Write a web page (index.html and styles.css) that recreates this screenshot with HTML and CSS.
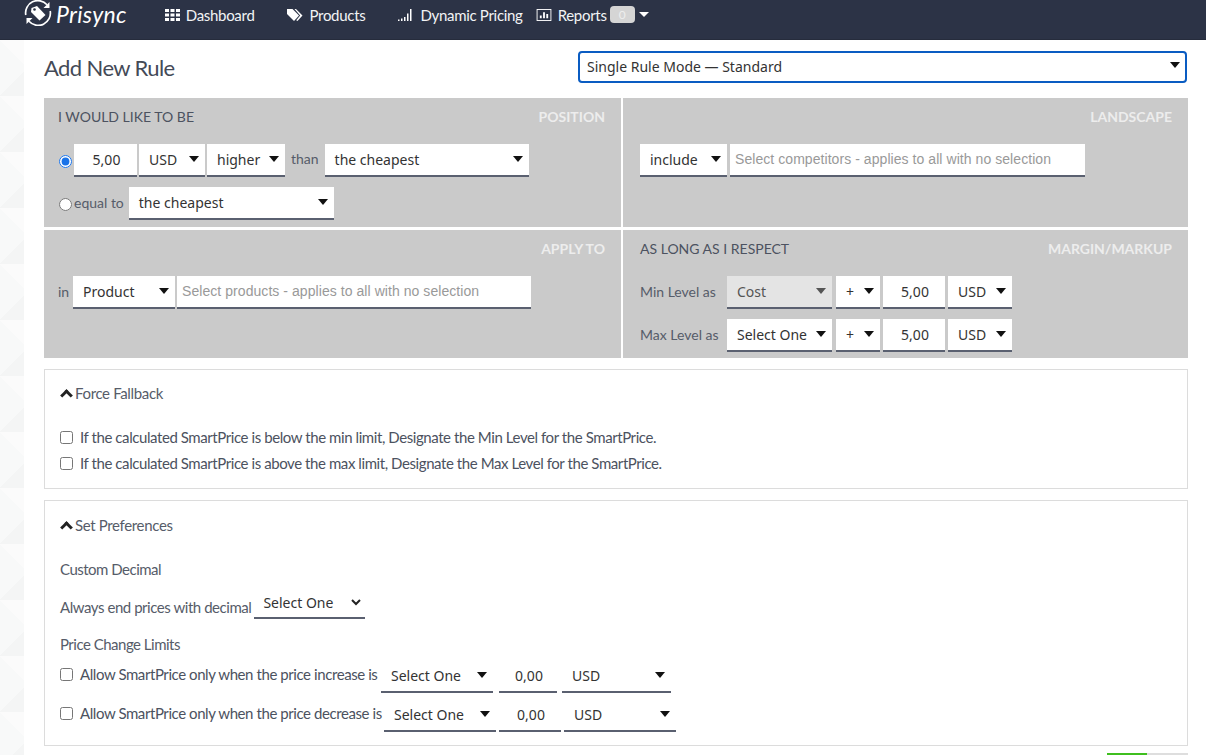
FILE: index.html
```html
<!DOCTYPE html>
<html lang="en">
<head>
<meta charset="utf-8">
<title>Add New Rule</title>
<link rel="stylesheet" href="styles.css">
</head>
<body>
<nav class="nav">
  <a class="brand">
    <svg class="brand-icon" viewBox="0 0 28 26" fill="none" stroke="#fff" stroke-width="1.700">
      <path d="M1.800 15A12.200 12.200 0 0 1 23 4.800"/>
      <path d="M26.200 11A12.200 12.200 0 0 1 5 21.200"/>
      <path d="M25.500 2v6h-6z" fill="#fff" stroke="none"/>
      <path d="M2.500 24v-6h6z" fill="#fff" stroke="none"/>
      <path d="M7.500 8l5.500-2 8.500 9-6 5.500-8.500-8.500z" fill="#fff" stroke="none"/>
      <circle cx="10.500" cy="9.500" r="1.300" fill="#2c3346" stroke="none"/>
    </svg>
    <span class="brand-name">Prisync</span>
  </a>
  <a class="nav-item nav-item-first">
    <svg class="nav-icon" viewBox="0 0 15 12" fill="#fff"><path d="M0 0h4v3H0zM5.500 0h4v3h-4zM11 0h4v3h-4zM0 4.500h4v3H0zM5.500 4.500h4v3h-4zM11 4.500h4v3h-4zM0 9h4v3H0zM5.500 9h4v3h-4zM11 9h4v3h-4z"/></svg>
    Dashboard
  </a>
  <a class="nav-item">
    <svg class="nav-icon" viewBox="0 0 16 12" fill="#fff"><path d="M0 0h5.500L12 6.500 7 12 0 5z"/><path d="M7.500 0h1.500L15.500 6.500 10.500 12l-1.300-.800 4-4.700z"/></svg>
    Products
  </a>
  <a class="nav-item">
    <svg class="nav-icon" viewBox="0 0 16 12" fill="#fff"><path d="M0 10.500h1.500V12H0zM3 9.500h1.500V12H3zM6 8h1.500v4H6zM9 4.500h1.500V12H9zM12 0h1.500v12H12z"/></svg>
    Dynamic Pricing
  </a>
  <a class="nav-item nav-item-tight">
    <svg class="nav-icon" viewBox="0 0 16 13" fill="none" stroke="#fff"><rect x=".5" y=".5" width="15" height="12"/><path d="M4.500 10V7M8 10V3.500M11.500 10V5.500" stroke-width="2"/></svg>
    Reports
    <span class="badge">0</span>
    <span class="nav-caret"></span>
  </a>
</nav>

<div class="page">
  <div class="strip"></div>
  <main class="main">
    <header class="head">
      <h1 class="title">Add New Rule</h1>
      <div class="mode">Single Rule Mode — Standard<span class="caret"></span></div>
    </header>

    <section class="rules">
      <div class="cell">
        <div class="cell-head"><span>I WOULD LIKE TO BE</span><span class="tag">POSITION</span></div>
        <div class="row">
          <input class="radio" type="radio" name="pos" checked>
          <input class="field w63" value="5,00">
          <div class="sel w66">USD<span class="caret"></span></div>
          <div class="sel w78">higher<span class="caret"></span></div>
          <span class="lbl than">than</span>
          <div class="sel w204">the cheapest<span class="caret"></span></div>
        </div>
        <div class="row">
          <input class="radio" type="radio" name="pos">
          <span class="lbl equal">equal to</span>
          <div class="sel w205">the cheapest<span class="caret"></span></div>
        </div>
      </div>

      <div class="cell cell-right">
        <div class="cell-head"><span></span><span class="tag">LANDSCAPE</span></div>
        <div class="row row-loose">
          <div class="sel w87">include<span class="caret"></span></div>
          <input class="field field-search w355" placeholder="Select competitors - applies to all with no selection">
        </div>
      </div>

      <div class="cell">
        <div class="cell-head"><span></span><span class="tag">APPLY TO</span></div>
        <div class="row">
          <span class="lbl in">in</span>
          <div class="sel w102">Product<span class="caret"></span></div>
          <input class="field field-search w354" placeholder="Select products - applies to all with no selection">
        </div>
      </div>

      <div class="cell cell-right">
        <div class="cell-head"><span>AS LONG AS I RESPECT</span><span class="tag">MARGIN/MARKUP</span></div>
        <div class="row row-wide">
          <span class="lbl level">Min Level as</span>
          <div class="sel sel-off w105">Cost<span class="caret"></span></div>
          <div class="sel w44">+<span class="caret"></span></div>
          <input class="field w62" value="5,00">
          <div class="sel w64">USD<span class="caret"></span></div>
        </div>
        <div class="row row-wide">
          <span class="lbl level">Max Level as</span>
          <div class="sel w105">Select One<span class="caret"></span></div>
          <div class="sel w44">+<span class="caret"></span></div>
          <input class="field w62" value="5,00">
          <div class="sel w64">USD<span class="caret"></span></div>
        </div>
      </div>
    </section>

    <section class="panel panel-fallback">
      <h2 class="panel-title"><span class="chev"></span>Force Fallback</h2>
      <label class="check check-a"><input type="checkbox">If the calculated SmartPrice is below the min limit, Designate the Min Level for the SmartPrice.</label>
      <label class="check check-b"><input type="checkbox">If the calculated SmartPrice is above the max limit, Designate the Max Level for the SmartPrice.</label>
    </section>

    <section class="panel panel-prefs">
      <h2 class="panel-title"><span class="chev"></span>Set Preferences</h2>
      <div class="sub sub-decimal">Custom Decimal</div>
      <div class="decimal">
        <span>Always end prices with decimal</span>
        <div class="plain-sel">Select One
          <svg class="chevron" viewBox="0 0 10 7" fill="none" stroke="#222" stroke-width="2"><path d="M1 1l4 4 4-4"/></svg>
        </div>
      </div>
      <div class="sub sub-limits">Price Change Limits</div>
      <div class="limit limit-a">
        <label class="check"><input type="checkbox">Allow SmartPrice only when the price increase is</label>
        <div class="sel sel-line w112">Select One<span class="caret"></span></div>
        <input class="field field-line w58" value="0,00">
        <div class="sel sel-line w109">USD<span class="caret"></span></div>
      </div>
      <div class="limit limit-b">
        <label class="check"><input type="checkbox">Allow SmartPrice only when the price decrease is</label>
        <div class="sel sel-line w112">Select One<span class="caret"></span></div>
        <input class="field field-line w62" value="0,00">
        <div class="sel sel-line w112">USD<span class="caret"></span></div>
      </div>
    </section>

    <div class="progress"><span class="progress-fill"></span></div>
  </main>
</div>
</body>
</html>
```

FILE: styles.css
```css
* { box-sizing: border-box; }

html, body {
  margin: 0;
  height: 755px;
  overflow: hidden;
  background: #fff;
  font-family: "Lato", "Liberation Sans", sans-serif;
  font-size: 14px;
  color: #565c69;
}

/* navigation */
.nav {
  display: flex;
  align-items: center;
  height: 40px;
  padding: 0 0 10px 24px;
  background: #2c3346;
  border-bottom: 1px solid #262c3c;
  color: #fff;
}
.brand { display: flex; align-items: center; }
.brand-icon { width: 28px; height: 26px; margin-top: -4px; }
.brand-name {
  margin: -2px 0 0 4px;
  font-size: 23px;
  font-style: italic;
  line-height: 28px;
  color: #fff;
  letter-spacing: .3px;
}
.nav-item {
  display: flex;
  align-items: center;
  margin-left: 33px;
  font-size: 15px;
  letter-spacing: -.3px;
  color: #f2f3f5;
  white-space: nowrap;
}
.nav-item-first { margin-left: 38px; }
.nav-item-tight { margin-left: 13px; }
.nav-icon { flex: none; width: 16px; height: 12px; margin-right: 6px; }
.nav-item-first .nav-icon { width: 15px; }
.badge {
  width: 25px;
  height: 17px;
  margin-left: 3px;
  border-radius: 4px;
  background: #d5d5d5;
  color: #eee;
  font-size: 12px;
  letter-spacing: 0;
  line-height: 17px;
  text-align: center;
}
.nav-caret {
  margin-left: 4px;
  border-top: 5px solid #fff;
  border-left: 5px solid transparent;
  border-right: 5px solid transparent;
}

/* page */
.page { display: flex; height: 715px; }
.strip {
  flex: 0 0 24px;
  background-color: #f8f9f9;
  background-image:
    linear-gradient(135deg, transparent 70%, #f4f5f5 70%),
    linear-gradient(45deg, transparent 70%, #fbfbfb 70%);
  background-size: 24px 56px;
}
.main { width: 1164px; padding-left: 20px; }

.head {
  display: flex;
  justify-content: space-between;
  align-items: center;
  height: 58px;
  padding: 11px 1px 15px 0;
}
.title {
  margin: 2px 0 0;
  font-size: 22px;
  font-weight: 400;
  color: #444a57;
  letter-spacing: -.6px;
  line-height: 32px;
}
.mode {
  display: flex;
  align-items: center;
  justify-content: space-between;
  width: 609px;
  height: 32px;
  padding: 0 5px 2px 7px;
  border: 2px solid #0a5cc2;
  border-radius: 4px;
  background: #fff;
  font-family: "Noto Sans", "Open Sans", sans-serif;
  font-size: 14px;
  color: #333;
}

/* rule grid */
.rules {
  display: grid;
  grid-template-columns: 577px 565px;
  grid-template-rows: 129px 128px;
  column-gap: 2px;
  row-gap: 3px;
}
.cell {
  padding: 0 16px 0 14px;
  background: #cacaca;
}
.cell-right { padding-left: 17px; }
.cell-head {
  display: flex;
  justify-content: space-between;
  height: 46px;
  padding-top: 10px;
  line-height: 18px;
  font-size: 14px;
  color: #4c5260;
}
.tag { color: #ededed; font-weight: 700; }

.row {
  display: flex;
  align-items: center;
  gap: 2px;
  height: 33px;
  margin-bottom: 10px;
}
.row-loose { gap: 3px; }
.row-wide { gap: 3px; }

.radio { width: 13px; height: 13px; margin: 2px 0 0 1px; accent-color: #1a73e8; }

.lbl { white-space: nowrap; }
.than { margin: -4px 4px 0 4px; }
.equal { margin: -2px 3px 0 0; }
.in { width: 13px; margin-top: -2px; }
.level { width: 87px; margin-top: -3px; }
.level + .sel { margin: 0 1px 0 -3px; }

.sel, .field {
  height: 33px;
  border: 0;
  border-bottom: 2px solid #5a6070;
  border-radius: 0;
  background: #fff;
  font-family: "Noto Sans", "Open Sans", sans-serif;
  font-size: 14px;
  color: #333;
  outline: 0;
}
.sel {
  display: flex;
  align-items: center;
  justify-content: space-between;
  padding: 0 6px 0 10px;
  white-space: nowrap;
}
.sel-off { background: #e4e4e4; color: #555; }
.sel-off .caret { border-top-color: #555; }
.field { padding: 0 8px 0 10px; text-align: center; }
.field-search {
  padding: 0 5px 2px;
  text-align: left;
  font-family: "Liberation Sans", sans-serif;
  font-size: 14px;
  letter-spacing: .06px;
}
.field-search::placeholder { color: #999; opacity: 1; }

.caret {
  flex: none;
  margin: -2px 0 0 0;
  border-top: 6px solid #111;
  border-left: 5px solid transparent;
  border-right: 5px solid transparent;
}

.w44 { width: 44px; }
.w58 { width: 58px; }
.w62 { width: 62px; }
.w63 { width: 63px; }
.w64 { width: 64px; }
.w66 { width: 66px; }
.w78 { width: 78px; }
.w87 { width: 87px; }
.w102 { width: 102px; }
.w105 { width: 105px; }
.w109 { width: 109px; }
.w112 { width: 112px; }
.w204 { width: 204px; }
.w205 { width: 205px; }
.w354 { width: 354px; }
.w355 { width: 355px; }

/* panels */
.panel {
  position: relative;
  margin-top: 11px;
  padding: 0 15px;
  border: 1px solid #dcdcdc;
  background: #fff;
}
.panel-fallback { height: 120px; }
.panel-prefs { height: 246px; }
.panel-title {
  display: flex;
  align-items: center;
  margin: 14px 0 0;
  height: 20px;
  font-size: 15px;
  font-weight: 400;
  letter-spacing: -.35px;
  color: #565c69;
}
.panel-fallback .panel-title { margin-top: 13px; }
.chev {
  flex: none;
  width: 9px;
  height: 9px;
  margin: 5px 4px 0 2px;
  border-top: 3px solid #222;
  border-left: 3px solid #222;
  transform: rotate(45deg);
}
.check {
  display: flex;
  align-items: center;
  white-space: nowrap;
  font-size: 15px;
  letter-spacing: -.42px;
  color: #4c5260;
}
.check input { flex: none; width: 13px; height: 13px; margin: 0 7px 0 0; }
.check-a { margin-top: 24px; height: 20px; }
.check-b { margin-top: 6px; height: 20px; }

.sub { height: 20px; line-height: 20px; font-size: 15px; letter-spacing: -.5px; }
.sub-decimal { margin-top: 24px; }
.sub-limits { margin-top: 15px; }
.decimal {
  display: flex;
  align-items: flex-end;
  height: 29px;
  margin-top: 11px;
  font-size: 15px;
  letter-spacing: -.45px;
}
.decimal > span { line-height: 20px; margin-bottom: 2px; }
.plain-sel {
  display: flex;
  align-items: center;
  justify-content: space-between;
  width: 111px;
  height: 29px;
  margin-left: 3px;
  padding: 0 4px 2px 9px;
  border-bottom: 2px solid #5a6070;
  font-family: "Noto Sans", "Open Sans", sans-serif;
  font-size: 14px;
  color: #333;
  letter-spacing: 0;
}
.chevron { width: 10px; height: 7px; }

.limit { display: flex; align-items: center; height: 29px; }
.limit-a { margin-top: 10px; gap: 5px; }
.limit-a .check { width: 316px; }
.limit-b { margin-top: 10px; gap: 3px; }
.limit-b .check { width: 321px; }
.sel-line, .field-line { height: 29px; padding-bottom: 4px; background: transparent; }
.limit .check { margin-top: -9px; }
.limit-a .sel + .field { margin-left: 1px; }

.progress {
  display: flex;
  width: 81px;
  height: 2px;
  margin: 7px 0 0 1063px;
  background: #dedede;
}
.progress-fill { width: 40px; background: #3fbf1f; }
```
